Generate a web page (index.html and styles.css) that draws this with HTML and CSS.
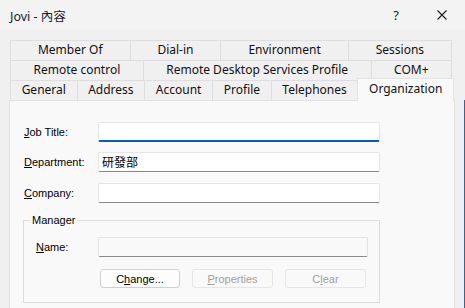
FILE: index.html
```html
<!DOCTYPE html>
<html lang="zh-Hant">
<head>
    <meta charset="UTF-8">
    <title>Jovi - 內容</title>
    <link rel="stylesheet" href="styles.css">
</head>
<body>
    <div class="titlebar">
        <span class="title">Jovi - 內容</span>
        <span class="caption-btn help">?</span>
        <span class="caption-btn close">
            <svg width="10" height="10" viewBox="0 0 10 10"><path d="M0.5 0.5L9.5 9.5M9.5 0.5L0.5 9.5" stroke="#1b1b1b" stroke-width="1.1"/></svg>
        </span>
    </div>

    <div class="tabs">
        <div class="tab-row">
            <div class="tab">Member Of</div>
            <div class="tab">Dial-in</div>
            <div class="tab">Environment</div>
            <div class="tab">Sessions</div>
        </div>
        <div class="tab-row">
            <div class="tab">Remote control</div>
            <div class="tab">Remote Desktop Services Profile</div>
            <div class="tab">COM+</div>
        </div>
        <div class="tab-row">
            <div class="tab">General</div>
            <div class="tab">Address</div>
            <div class="tab">Account</div>
            <div class="tab">Profile</div>
            <div class="tab">Telephones</div>
            <div class="tab active">Organization</div>
        </div>
    </div>

    <div class="panel">
        <div class="form">
            <label class="field-label"><u>J</u>ob Title:</label>
            <div class="input focused"></div>
            <label class="field-label"><u>D</u>epartment:</label>
            <div class="input">研發部</div>
            <label class="field-label last"><u>C</u>ompany:</label>
            <div class="input last"></div>
        </div>

        <fieldset class="group">
            <legend>Manager</legend>
            <div class="group-row">
                <label class="field-label name-label"><u>N</u>ame:</label>
                <div class="input disabled"></div>
            </div>
            <div class="buttons">
                <button class="btn">C<u>h</u>ange...</button>
                <button class="btn" disabled><u>P</u>roperties</button>
                <button class="btn" disabled>C<u>l</u>ear</button>
            </div>
        </fieldset>
    </div>
</body>
</html>
```

FILE: styles.css
```css
/* Dialog frame */
body, html {
    margin: 0;
    padding: 0;
    width: 100%;
    height: 100%;
    overflow: hidden;
}

body {
    background-color: #f0f0f0;
    font-family: 'Noto Sans', 'Noto Sans CJK TC', sans-serif;
    color: #000000;
    position: relative;
}

/* window edge on the right */
body::after {
    content: '';
    position: absolute;
    top: 100px;
    right: 0;
    width: 1px;
    bottom: 0;
    background-color: #3f5f98;
}

/* Title bar */
.titlebar {
    display: flex;
    align-items: center;
    height: 30px;
    background-color: #f3f3f3;
    padding-left: 10px;
}

.title {
    flex: 1;
    font-size: 12.5px;
    color: #1a1a1a;
}

.caption-btn {
    width: 46px;
    height: 30px;
    display: flex;
    align-items: center;
    justify-content: center;
}

.help {
    font-size: 13px;
    color: #1a1a1a;
}

/* Tabs */
.tabs {
    margin: 10px 0 0 10px;
    width: 442px;
}

.tab-row {
    display: flex;
    height: 20px;
}

.tab {
    flex: 1 1 auto;
    box-sizing: border-box;
    height: 20px;
    border: 1px solid #dedede;
    border-bottom: none;
    margin-left: -1px;
    background-color: #f0f0f0;
    font-size: 12px;
    line-height: 18px;
    text-align: center;
    white-space: nowrap;
    padding: 0 4px;
    color: #111111;
}

.tab:first-child {
    margin-left: 0;
}

.tab.active {
    position: relative;
    z-index: 2;
    height: 23px;
    margin: -2px -2px -1px -1px;
    background-color: #f9f9f9;
    border-color: #e3e3e3;
    line-height: 19px;
}

/* Property page */
.panel {
    margin-left: 9px;
    width: 446px;
    height: 220px;
    box-sizing: border-box;
    background-color: #f9f9f9;
    border: 1px solid #e3e3e3;
    padding: 21px 0 0 14px;
    font-family: 'Liberation Sans', Arial, sans-serif;
    font-size: 11px;
}

.form {
    display: grid;
    grid-template-columns: 74px 282px;
    row-gap: 10px;
    align-items: center;
}

.form .last {
    margin-top: 1px;
}

.field-label u {
    text-underline-offset: 1px;
}

.input {
    box-sizing: border-box;
    height: 20px;
    background-color: #ffffff;
    border: 1px solid #e5e5e5;
    border-bottom-color: #868686;
    border-radius: 2px;
    padding-left: 3px;
    font-family: 'Noto Sans CJK TC', sans-serif;
    font-size: 12px;
    line-height: 18px;
}

.input.focused {
    border-bottom: 2px solid #005fb8;
}

.input.disabled {
    background-color: #f9f9f9;
    border-color: #e3e3e3;
    border-bottom-color: #8a8a8a;
}

/* Manager group */
.group {
    box-sizing: border-box;
    width: 357px;
    margin: 10px 0 0 -1px;
    padding: 10px 10px 14px 12px;
    border: 1px solid #dcdcdc;
}

.group legend {
    margin-left: -6px;
    padding: 0 2px;
    line-height: 14px;
    font-size: 11px;
}

.group-row {
    display: flex;
    align-items: center;
}

.name-label {
    width: 62px;
}

.group-row .input {
    width: 270px;
}

.buttons {
    display: flex;
    gap: 12px;
    margin: 12px 0 0 64px;
}

.btn {
    width: 81px;
    height: 19px;
    padding: 0;
    background-color: #fdfdfd;
    border: 1px solid #d0d0d0;
    border-radius: 3px;
    font-family: 'Liberation Sans', Arial, sans-serif;
    font-size: 11px;
    color: #000000;
}

.btn:first-child {
    width: 80px;
}

.btn:disabled {
    background-color: #f9f9f9;
    border-color: #e6e6e6;
    color: #a0a0a0;
}
```
